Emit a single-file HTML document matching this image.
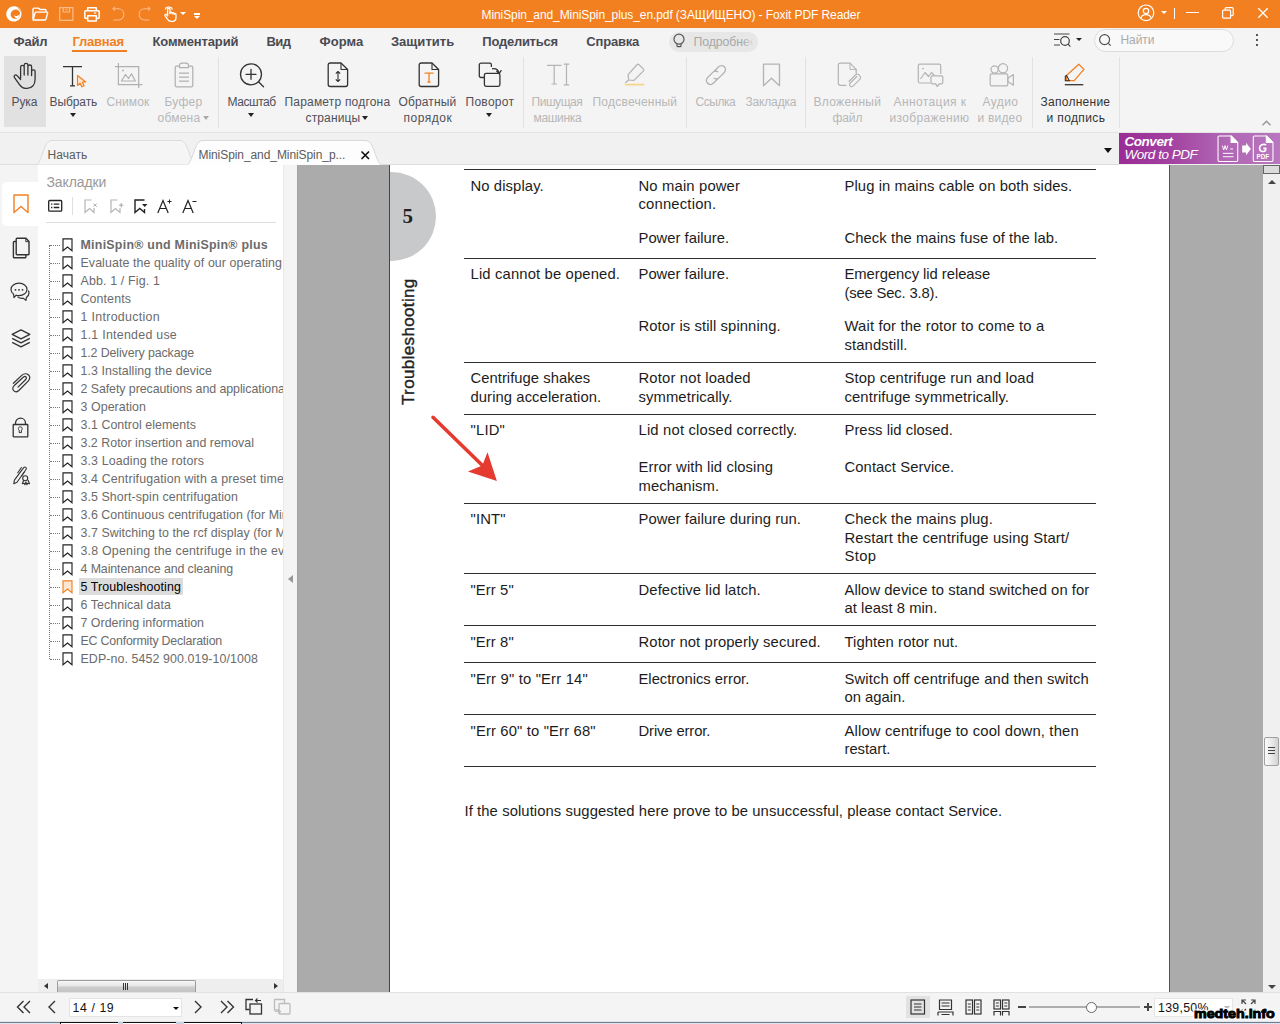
<!DOCTYPE html>
<html><head><meta charset="utf-8"><title>Foxit PDF Reader</title>
<style>
*{box-sizing:border-box;margin:0;padding:0}
html,body{width:1280px;height:1024px;overflow:hidden;background:#f4f4f4;font-family:"Liberation Sans",sans-serif;}
.a{position:absolute}
.t{position:absolute;white-space:pre;line-height:20px;height:20px}
svg{position:absolute;overflow:visible}
#title{left:0;top:0;width:1280px;height:28px;background:#f28021}
#menu{left:0;top:28px;width:1280px;height:26px;background:#f4f4f4}
#ribbon{left:0;top:54px;width:1280px;height:79px;background:#f4f4f4;border-bottom:1px solid #e3e3e3}
#tabs{left:0;top:133px;width:1280px;height:32px;background:#f1f1f1}
#docarea{left:297px;top:165px;width:966px;height:827px;background:#ababab;overflow:hidden;border-left:1px solid #a2a2a2}
#page{left:91px;top:0;width:781px;height:827px;background:#fff;border-left:1px solid #444;border-right:1px solid #555}
.dl{position:absolute;white-space:pre;font-size:14.8px;color:#1c1c1c;line-height:18px;height:18px}
.hl{position:absolute;left:464px;width:632px;height:1px;background:#302e2e}
#side{left:0;top:165px;width:38px;height:827px;background:#f4f4f4}
#bmp{left:38px;top:165px;width:245px;height:827px;background:#fff;overflow:hidden}
#split{left:283px;top:165px;width:14px;height:827px;background:#f4f4f4;border-left:1px solid #e9e9e9}
#vsb{left:1263px;top:165px;width:17px;height:827px;background:#f0f0f0}
#status{left:0;top:992px;width:1280px;height:29px;background:#f4f4f4;border-top:1px solid #e1e1e1}
.bm{position:absolute;white-space:pre;color:#6b6b6b;line-height:18px;height:18px}
.sep{position:absolute;top:57px;width:1px;height:71px;background:#e2e2e2}
.ar{position:absolute;width:0;height:0;border-left:3.5px solid transparent;border-right:3.5px solid transparent;border-top:4px solid #222}
</style></head><body>

<div class="a" id="title"></div>
<div class="a" id="menu"></div>
<div class="a" id="ribbon"></div>
<div class="a" id="tabs"></div>
<!-- TITLE BAR ICONS -->
<svg style="left:6px;top:6px" width="16" height="16" viewBox="0 0 16 16"><path d="M8.300.3C3.700.3.300 3.700.300 8.100c0 4.300 3.100 7.500 7.200 7.500 4.500 0 8-3.200 8-7.600 0-2.100-.6-3.900-1.700-5.300C12.600 1.300 10.600.3 8.300.3z" fill="#fff"/><ellipse cx="9.400" cy="8.200" rx="4.900" ry="4.500" transform="rotate(-35 9.400 8.200)" fill="#f28021"/><path d="M8.200 9.600c1.800.9 4 .3 5.600-1.700-.1 1.700-.8 3.200-2 4.200-1.700.6-3.200-.6-3.600-2.500z" fill="#fff"/><path d="M11.300 1.700c1.500.7 2.800 2 3.500 3.700" stroke="#f28021" stroke-width=".7" fill="none"/></svg>
<svg style="left:32px;top:7px" width="17" height="14" viewBox="0 0 17 14" fill="none" stroke="#fff" stroke-width="1.400" stroke-linejoin="round"><path d="M1 12.800V2.400c0-.8.500-1.300 1.300-1.300h3.800c.6 0 1 .3 1.200.8l.3.600h5.200c.8 0 1.300.5 1.300 1.300v1.300"/><path d="M1.100 13l2-7.300c.1-.4.400-.6.800-.6h10.900c.6 0 .9.400.8 1l-1.700 6.300c-.1.400-.4.600-.8.600z"/></svg>
<svg style="left:59px;top:7px" width="15" height="14" viewBox="0 0 15 14" fill="none" stroke="#f9bb8a" stroke-width="1.200"><path d="M.7.700h13.200v12.600H.7z"/><path d="M4.200.7v4.300h6.300V.7"/><path d="M6.500 2.800h1.800"/></svg>
<svg style="left:84px;top:7px" width="16" height="15" viewBox="0 0 16 15" fill="none" stroke="#fff" stroke-width="1.500" stroke-linejoin="round"><path d="M3.700 3.700V.8h8.600v2.900"/><path d="M3.700 11.200H1.600c-.5 0-.8-.3-.8-.8V4.600c0-.5.300-.8.800-.8h12.800c.5 0 .8.300.8.800v5.800c0 .5-.3.800-.8.800h-2.100"/><path d="M3.700 8.700h8.600v5.400H3.700z"/><path d="M10 6h2.200" stroke-width="1.100"/></svg>
<svg style="left:112px;top:6px" width="13" height="15" viewBox="0 0 13 15" fill="none" stroke="#f9b988" stroke-width="1.050"><path d="M1 2.700h5.400c3.100 0 5.400 2.400 5.400 5.600s-2.300 5.600-5.400 5.600H1.500"/><path d="M2.900.8 1 2.700l1.900 1.900"/></svg>
<svg style="left:138px;top:6px" width="13" height="15" viewBox="0 0 13 15" fill="none" stroke="#f9b988" stroke-width="1.050"><path d="M12 2.700H6.600c-3.100 0-5.400 2.400-5.400 5.600s2.300 5.600 5.400 5.600h4.900"/><path d="M10.100.8 12 2.700l-1.900 1.900"/></svg>
<svg style="left:163px;top:6px" width="14" height="16" viewBox="0 0 14 16" fill="none" stroke="#fff" stroke-width="1.300" stroke-linejoin="round" stroke-linecap="round"><path d="M4.600 9.500V3.300c0-1.700 2.400-1.700 2.400 0v4.200"/><path d="M7 7.200c0-1.500 2.100-1.500 2.100 0v.6c0-1.400 2-1.400 2 0v.6c0-1.300 1.900-1.300 1.900 0v3.100c0 2.400-1.300 3.800-3.500 3.800H8c-1.600 0-2.500-.7-3.400-2L2.100 9.900c-.8-1.200.7-2.200 1.600-1.200l.9 1"/><path d="M2.500 3.300C2.500.300 9.100.300 9.100 3.300" stroke-width="1.100"/></svg>
<div class="ar" style="left:180px;top:12px;border-top-color:#fff;border-left-width:3px;border-right-width:3px;border-top-width:3.500px"></div>
<div class="a" style="left:193.500px;top:13px;width:6px;height:1.500px;background:#fff"></div>
<div class="ar" style="left:193.500px;top:16px;border-top-color:#fff;border-left-width:3px;border-right-width:3px;border-top-width:3.500px"></div>
<!-- window controls -->
<svg style="left:1137px;top:4px" width="18" height="18" viewBox="0 0 18 18" fill="none" stroke="#fff" stroke-width="1.200"><circle cx="9" cy="8.800" r="7.800"/><circle cx="9" cy="7" r="2.700"/><path d="M3.800 14.400c.7-2.500 2.700-3.700 5.200-3.700s4.500 1.200 5.200 3.700"/></svg>
<div class="ar" style="left:1160.500px;top:11px;border-top-color:#fff;border-left-width:3px;border-right-width:3px;border-top-width:3.500px"></div>
<div class="a" style="left:1174px;top:8px;width:1.200px;height:11px;background:#fff"></div>
<div class="a" style="left:1186px;top:12px;width:12.500px;height:1.300px;background:#fff"></div>
<svg style="left:1222px;top:7px" width="12" height="12" viewBox="0 0 12 12" fill="none" stroke="#fff" stroke-width="1.200"><rect x=".6" y="3.200" width="8" height="8" rx="1"/><path d="M3.200 3V1.600c0-.6.400-1 1-1h6c.6 0 1 .4 1 1v6c0 .6-.4 1-1 1H8.800"/></svg>
<svg style="left:1258px;top:8px" width="10" height="10" viewBox="0 0 10 10" fill="none" stroke="#fff" stroke-width="1.300"><path d="M.3.300l9.400 9.400M9.700.3.300 9.700"/></svg>
<!-- MENU ROW -->
<div class="a" style="left:72px;top:49.500px;width:55px;height:2.500px;background:#f28021"></div>
<div class="a" style="left:668.500px;top:31.500px;width:89.500px;height:20px;border-radius:10px;background:#e7e7e7;overflow:hidden"><div class="t" style="left:25px;top:0;font-size:12.300px;color:#a8a8a8;letter-spacing:-.1px">Подробнее</div><div class="a" style="left:74px;top:0;width:16px;height:20px;background:linear-gradient(90deg,rgba(231,231,231,0),#e7e7e7 70%)"></div></div>
<svg style="left:673px;top:33px" width="12" height="16" viewBox="0 0 12 16" fill="none" stroke="#555" stroke-width="1.200"><circle cx="6" cy="6.200" r="5"/><path d="M4 11.300v1.500c0 .5.400.9.900.9h2.200c.5 0 .9-.4.900-.9v-1.500"/></svg>
<svg style="left:1054px;top:33px" width="17" height="15" viewBox="0 0 17 15" fill="none" stroke="#444" stroke-width="1.200"><path d="M0 1h15.500M0 6.500h5.500M0 12h6"/><circle cx="11" cy="8" r="4.300"/><path d="M14.100 11.200l2.300 2.500"/></svg>
<div class="ar" style="left:1075.500px;top:38px;border-left-width:3px;border-right-width:3px;border-top-width:3.500px"></div>
<div class="a" style="left:1094px;top:29px;width:140px;height:22.500px;border-radius:11.500px;background:#f9f9f9;border:1px solid #dcdcdc"></div>
<svg style="left:1099px;top:34px" width="13" height="13" viewBox="0 0 13 13" fill="none" stroke="#555" stroke-width="1.200"><circle cx="5.600" cy="5.600" r="5"/><path d="M9.300 9.300l2.400 2.400"/></svg>
<div class="a" style="left:1256px;top:34px;width:2.200px;height:2.200px;background:#555;box-shadow:0 5px 0 #555,0 10px 0 #555"></div>
<!-- RIBBON -->
<div class="a" style="left:4px;top:56px;width:42px;height:71px;background:#e1e1e1"></div>
<div class="sep" style="left:218px"></div><div class="sep" style="left:523px"></div><div class="sep" style="left:686px"></div><div class="sep" style="left:805px"></div><div class="sep" style="left:1032px"></div><div class="sep" style="left:1119px"></div>
<div class="ar" style="left:69.500px;top:113px"></div>
<div class="ar" style="left:202.500px;top:115.500px;border-top-color:#aaa"></div>
<div class="ar" style="left:248px;top:113px"></div>
<div class="ar" style="left:362px;top:115.500px"></div>
<div class="ar" style="left:486px;top:113px"></div>
<svg style="left:1262px;top:120px" width="9" height="6" viewBox="0 0 9 6" fill="none" stroke="#999" stroke-width="1.500"><path d="M.5 5.300l4-4 4 4"/></svg>
<!-- ribbon icons -->
<!-- hand -->
<svg style="left:13px;top:62px" width="25" height="27" viewBox="0 0 25 27" fill="none" stroke="#333" stroke-width="1.300" stroke-linecap="round" stroke-linejoin="round"><path d="M7.600 16V5.200c0-2.400 3.600-2.400 3.600 0V13M11.200 5V3.200c0-2.400 3.700-2.400 3.700 0V13M14.900 4.800c0-2.400 3.700-2.400 3.700 0V13.500M18.600 9.600c0-2.300 3.500-2.300 3.500 0V17c0 5.500-3 9.300-8 9.300h-1.600c-2.800 0-4.400-1.300-5.800-3.400L1.500 15.700c-1.300-2 1-3.700 2.600-2.100l3.500 3.900"/></svg>
<!-- select text -->
<svg style="left:62px;top:65px" width="26" height="23" viewBox="0 0 26 23" fill="none"><path d="M1 1.700h19M10.500 1.700v19M8 20.800h5" stroke="#333" stroke-width="1.300"/><path d="M15.500 10.500v10l2.600-2.300 1.700 3.600 2.300-1.100-1.700-3.500 3.400-.3z" fill="#fde6d0" stroke="#f28021" stroke-width="1.200" stroke-linejoin="round"/></svg>
<!-- snapshot -->
<svg style="left:114px;top:62px" width="29" height="27" viewBox="0 0 29 27" fill="none" stroke="#b0b0b0" stroke-width="1.200"><path d="M4.400 1v21.700h24M1 4.700h23.700V26"/><path d="M7.500 19l4-6.500 3 4 3-4.800 3.800 7.300z" stroke-linejoin="round"/><circle cx="9" cy="8.500" r=".9" fill="#b0b0b0" stroke="none"/></svg>
<!-- clipboard -->
<svg style="left:174px;top:62px" width="20" height="26" viewBox="0 0 20 26" fill="none" stroke="#b0b0b0" stroke-width="1.200"><path d="M5.500 4.200H2.400c-.7 0-1.200.5-1.200 1.200v18.200c0 .7.500 1.200 1.200 1.200h15.200c.7 0 1.200-.5 1.200-1.200V5.400c0-.7-.5-1.200-1.200-1.200h-3.100"/><path d="M5.500 5.600V3.400c0-1.300 1-2.300 2.300-2.300h4.400c1.300 0 2.300 1 2.300 2.300v2.200z"/><path d="M5 11.200h10M5 15.200h10M5 19.200h10"/></svg>
<!-- zoom -->
<svg style="left:239px;top:62px" width="27" height="27" viewBox="0 0 27 27" fill="none" stroke="#333" stroke-width="1.300"><circle cx="12" cy="12.300" r="10.500"/><path d="M12 7.300v10M7 12.300h10M19.500 19.800l5 5" stroke-linecap="round"/></svg>
<!-- fit page -->
<svg style="left:327px;top:62px" width="22" height="26" viewBox="0 0 22 26" fill="none" stroke="#333" stroke-width="1.300" stroke-linejoin="round"><path d="M14 1H3.300C2 1 1.200 1.800 1.200 3.100v19.300c0 1.300.8 2.100 2.100 2.100h15.200c1.300 0 2.100-.8 2.100-2.100V7.500z"/><path d="M14 1v6.500h6.600" stroke-width="1.100"/><path d="M11 9.500v10M8.800 11.700 11 9.500l2.200 2.200M8.800 17.300 11 19.500l2.200-2.200" stroke-width="1.100"/></svg>
<!-- reflow -->
<svg style="left:418px;top:62px" width="22" height="26" viewBox="0 0 22 26" fill="none" stroke="#333" stroke-width="1.300" stroke-linejoin="round"><path d="M14 1H3.300C2 1 1.200 1.800 1.200 3.100v19.300c0 1.300.8 2.100 2.100 2.100h15.200c1.300 0 2.100-.8 2.100-2.100V7.500z"/><path d="M14 1v6.500h6.600" stroke-width="1.100"/><path d="M6.500 11.200h9M11 11.200v9M9.300 20.200h3.400" stroke="#f28021" stroke-width="1.300"/></svg>
<!-- rotate -->
<svg style="left:478px;top:62px" width="25" height="26" viewBox="0 0 25 26" fill="none" stroke="#333" stroke-width="1.300" stroke-linejoin="round"><path d="M6.300 15.500H3c-1 0-1.700-.7-1.700-1.700V2.900c0-1 .7-1.700 1.700-1.700h8.700c1 0 1.700.7 1.700 1.700v2"/><rect x="6.400" y="11.300" width="15.500" height="13" rx="1.700"/><path d="M14 6.800c3.600-.6 6.300 1 7 4.300"/><path d="M18.700 9.200l2.500 2.200 1.900-2.800" stroke-linecap="round"/></svg>
<!-- typewriter -->
<svg style="left:546px;top:63px" width="25" height="23" viewBox="0 0 25 23" fill="none" stroke="#b3b3b3" stroke-width="1.200"><path d="M1 2.400h14.500M8.200 2.400v18.400M5.500 21h5.500M17.800 1.200h5.400M17.800 21.800h5.400M20.500 1.200v20.600"/></svg>
<!-- highlight -->
<svg style="left:624px;top:63px" width="22" height="24" viewBox="0 0 22 24" fill="none" stroke="#b3b3b3" stroke-width="1.200" stroke-linejoin="round"><path d="M14.800 1.500l4.700 4.700c.5.500.5 1.100 0 1.600L10 17.300l-5.300-.3-.6-5.400 9.100-10.100c.5-.5 1.100-.5 1.600 0z"/><path d="M4.700 17 2 19.200l-1 .1" /><path d="M.8 21.600h19.500" stroke="#f7d68a" stroke-width="1.800"/></svg>
<!-- link -->
<svg style="left:704px;top:63px" width="24" height="24" viewBox="0 0 24 24" fill="none" stroke="#b3b3b3" stroke-width="1.300" stroke-linecap="round"><path d="M10.200 8.200l4.200-4.200c1.800-1.800 4.300-1.800 5.900-.2 1.600 1.600 1.600 4.100-.2 5.900l-4.900 4.900c-1.500 1.500-3.700 1.500-5 .6"/><path d="M13.800 15.800l-4.200 4.200c-1.800 1.800-4.300 1.800-5.900.2-1.600-1.600-1.600-4.100.2-5.900l4.900-4.900c1.500-1.500 3.700-1.500 5-.6"/></svg>
<!-- bookmark -->
<svg style="left:762px;top:63px" width="19" height="24" viewBox="0 0 19 24" fill="none" stroke="#b3b3b3" stroke-width="1.300" stroke-linejoin="round"><path d="M1.500 1.200h16v21.500l-8-7.500-8 7.500z"/></svg>
<!-- attachment file -->
<svg style="left:837px;top:62px" width="24" height="27" viewBox="0 0 24 27" fill="none" stroke="#b3b3b3" stroke-width="1.200" stroke-linejoin="round" stroke-linecap="round"><path d="M9 23.300H3.300c-1.200 0-2-.8-2-2V3.200c0-1.200.8-2 2-2H13l6.200 6.200v4"/><path d="M13 1.200v6.200h6.200" stroke-width="1"/><path d="M19.800 14.500l-6.500 6.500c-1 1-.9 2.300-.1 3.100.8.800 2.100.8 3.100-.2l6-6c1.500-1.500 1.400-3.400.2-4.600-1.200-1.200-3.100-1.200-4.600.2l-6 6" stroke-width="1.100"/></svg>
<!-- image annotation -->
<svg style="left:917px;top:63px" width="27" height="25" viewBox="0 0 27 25" fill="none" stroke="#b3b3b3" stroke-width="1.200" stroke-linejoin="round"><path d="M13.500 20H2.800c-.9 0-1.500-.6-1.500-1.500V2.700c0-.9.600-1.500 1.500-1.500h19.400c.9 0 1.500.6 1.500 1.500V11"/><path d="M3.500 16l4.500-6.500 3.500 4 3-4 3 3"/><circle cx="6" cy="5.600" r=".9" fill="#b3b3b3" stroke="none"/><path d="M15.200 12.800h9.400c.7 0 1.200.5 1.200 1.200v5.600c0 .7-.5 1.200-1.200 1.200h-2.400l-1.900 2.600-1.700-2.600h-3.400c-.7 0-1.200-.5-1.200-1.200V14c0-.7.500-1.200 1.200-1.200z" fill="#f4f4f4"/></svg>
<!-- audio video -->
<svg style="left:989px;top:63px" width="26" height="24" viewBox="0 0 26 24" fill="none" stroke="#b3b3b3" stroke-width="1.200" stroke-linejoin="round"><circle cx="5.600" cy="6.500" r="3.600"/><circle cx="14" cy="5.300" r="4.600"/><rect x="1.200" y="10.800" width="17.600" height="12" rx="1.400"/><path d="M18.800 15.300l5.600-3.700v10.600l-5.600-3.700z"/></svg>
<!-- fill & sign -->
<svg style="left:1063px;top:63px" width="24" height="24" viewBox="0 0 24 24" fill="none" stroke-linejoin="round"><path d="M15.800 1.300l5.100 5.100-9.700 11.200-7.600.1-.100-5.300z" stroke="#f28021" stroke-width="1.300"/><path d="M3.500 12.400l2.900 5.300H2.300v-4.500z" stroke="#333" stroke-width="1.100"/><path d="M1.800 21.700h18.500" stroke="#333" stroke-width="1.300"/></svg>

<!-- TABS -->
<div class="a" style="left:0;top:164px;width:1119px;height:1px;background:#dedede"></div>
<svg style="left:0;top:133px" width="400" height="32" viewBox="0 133 400 32"><path d="M37.500 164.500C43 158 43.500 140.500 52 140.500H180C188 140.500 189 158 194.500 164.500" fill="#f5f5f5" stroke="#dcdcdc" stroke-width="1"/><path d="M188 164.500C194 158 194.500 140.500 203 140.500H365C374 140.500 374.500 158 380.500 164.500V165.500H188z" fill="#fdfdfd" stroke="none"/><path d="M188 164.500C194 158 194.500 140.500 203 140.500H365C374 140.500 374.500 158 380.500 164.500" fill="none" stroke="#d9d9d9" stroke-width="1"/><path d="M361.500 151.500l7.500 7.500M369 151.500l-7.500 7.500" stroke="#111" stroke-width="1.600" fill="none"/></svg>
<div class="ar" style="left:1103.500px;top:147.500px;border-left-width:4.500px;border-right-width:4.500px;border-top-width:5px;border-top-color:#111"></div>
<!-- convert banner -->
<div class="a" style="left:1119px;top:133px;width:161px;height:31px;background:linear-gradient(90deg,#9a2c96 0%,#a2409f 30%,#b066b4 65%,#b877be 100%)"></div>
<svg style="left:1216.500px;top:135px" width="60" height="28" viewBox="0 0 62 29" fill="none" stroke="#fff" stroke-width="1.100" stroke-linejoin="round"><path d="M14.500 1H2.200C1.500 1 1 1.500 1 2.200v24c0 .7.500 1.200 1.200 1.200h18c.7 0 1.200-.5 1.200-1.200V7.800z"/><path d="M14.500 1v6.800h6.900z" fill="#fff"/><path d="M5.500 11l1.400 4.500L8.300 11l1.400 4.500 1.400-4.500M13.500 14.500h3M6 19h11M6 22.500h11" stroke-width="1"/><path d="M26 11h4V8l5 6.500-5 6.500v-3h-4z" fill="#fff" stroke="none"/><path d="M51 1H38.700c-.7 0-1.200.5-1.200 1.200v24c0 .7.500 1.200 1.200 1.200h18c.7 0 1.200-.5 1.200-1.200V7.800z"/><path d="M51 1v6.800h6.900z" fill="#fff"/><path d="M51 10.200c-3.500-1.500-7 .3-7 3.500 0 3 3.400 4.400 6 2.600l.5-2.400h-2.600" stroke-width="1.700"/><text x="40.800" y="25" font-family="Liberation Sans" font-size="6.500" fill="#fff" stroke="none" font-weight="700">PDF</text></svg>

<div class="a" id="side"></div>
<div class="a" id="bmp"></div>
<div class="a" id="split"></div>
<div class="a" id="docarea"><div class="a" id="page"></div></div>
<div class="a" id="vsb"></div>
<div class="a" id="status"></div>
<!-- side strip -->
<div class="a" style="left:2px;top:181.500px;width:36px;height:44.500px;background:#fff;border-radius:5px 0 0 5px"></div>
<svg style="left:13px;top:194px" width="16" height="20" viewBox="0 0 16 20" fill="none" stroke="#f28021" stroke-width="1.400" stroke-linejoin="round"><path d="M1 1h14v17.500l-7-6-7 6z"/></svg>
<svg style="left:12px;top:237px" width="19" height="22" viewBox="0 0 19 22" fill="none" stroke="#333" stroke-width="1.400" stroke-linejoin="round"><path d="M4.200 4.500H2.200c-.5 0-.8.300-.8.800v14.600c0 .5.300.8.800.8h10.900c.5 0 .8-.3.800-.8v-2"/><path d="M5 1.300h9l3 3.200v12.400c0 .5-.3.800-.8.800H5c-.5 0-.8-.3-.8-.8V2.100c0-.5.300-.8.800-.8z"/><path d="M13.800 1.500v3.200h3" stroke-width="1"/></svg>
<svg style="left:10px;top:282px" width="21" height="21" viewBox="0 0 21 21" fill="none" stroke="#333" stroke-width="1.200" stroke-linejoin="round"><path d="M9 1.200c4.500 0 8 2.700 8 6.200s-3.500 6.200-8 6.200c-1 0-1.900-.1-2.800-.4L4 15.500l-.4-3.300C2 11 1 9.300 1 7.400 1 3.900 4.500 1.200 9 1.200z"/><path d="M18.300 8.600c.5.800.7 1.600.7 2.500 0 1.700-1 3.200-2.600 4.300l-.5 3-2.400-2c-2.300.2-4.600-.3-6-1.700"/><circle cx="5.500" cy="7.800" r=".9" fill="#333" stroke="none"/><circle cx="9" cy="7.800" r=".9" fill="#333" stroke="none"/><circle cx="12.500" cy="7.800" r=".9" fill="#333" stroke="none"/></svg>
<svg style="left:11px;top:329px" width="20" height="19" viewBox="0 0 20 19" fill="none" stroke="#333" stroke-width="1.300" stroke-linejoin="round"><path d="M10 .8l8.800 4.500L10 9.800 1.200 5.300z"/><path d="M1.200 9.300l8.800 4.500 8.800-4.500M1.200 13.300l8.800 4.500 8.800-4.500"/></svg>
<svg style="left:10px;top:370px" width="22" height="24" viewBox="0 0 22 24" fill="none" stroke="#333" stroke-width="1.200" stroke-linecap="round"><path d="M3.400 13.300L12 5.100C14 3.200 17 3.400 18.600 5c1.600 1.600 1.600 4-.2 5.800L8.800 20.500c-1.600 1.500-3.800 1.500-5.100.2-1.300-1.300-1.300-3.300.3-4.900L13.500 7c1-.8 2-.6 2.500 0 .6.700.5 1.700-.3 2.500L8 17.200"/></svg>
<svg style="left:12px;top:417px" width="17" height="21" viewBox="0 0 17 21" fill="none" stroke="#333" stroke-width="1.300" stroke-linejoin="round"><rect x="1.200" y="7.500" width="14.600" height="12.300" rx=".6"/><path d="M3.500 7.400V6.200C3.500 3.300 5.700 1.200 8.500 1.200s5 2.100 5 5v1.200"/><path d="M8.300 9.800c1.100 0 1.900.8 1.900 1.800 0 .7-.3 1.200-.8 1.500v2.500H7.200v-2.500c-.5-.3-.8-.8-.8-1.500 0-1 .8-1.800 1.900-1.800z" stroke-width="1"/></svg>
<svg style="left:12px;top:466px" width="19" height="20" viewBox="0 0 19 20" fill="none" stroke="#333" stroke-width="1.100" stroke-linejoin="round" stroke-linecap="round"><path d="M11.700 1.700c.6-.7 1.500-.8 2.100-.3.600.5.700 1.400.2 2.100L5 16.300l-3.200 1.400.6-3.500z"/><path d="M9.400 1.500L5.800 6.800M12.500 5.800l-2.700 4"/><circle cx="13.200" cy="12.200" r="2.500"/><path d="M11.700 14.300l-1.400 3.400 1.800-.5.800 1.500 1-2.700 1 2.700.8-1.500 1.800.5-1.400-3.400"/></svg>
<!-- bookmark toolbar -->
<svg style="left:48px;top:199px" width="16" height="14" viewBox="0 0 16 14" fill="none" stroke="#222" stroke-width="1.300"><rect x=".7" y="1.500" width="13" height="10.700" rx="1"/><path d="M5.700 5.200h5.600M5.700 8.500h5.600M3 5.200h1.300M3 8.500h1.300"/></svg>
<div class="a" style="left:72px;top:197px;width:1px;height:18px;background:#e0e0e0"></div>
<svg style="left:84px;top:199px" width="15" height="15" viewBox="0 0 15 15" fill="none" stroke="#b5b5b5" stroke-width="1.200"><path d="M7.500 1H1v12.500l4.500-4 4.500 4V9"/><path d="M9.700 4.700l3 3M12.700 4.700l-3 3" stroke-width="1" stroke="#a6a6a6"/></svg>
<svg style="left:110px;top:199px" width="15" height="15" viewBox="0 0 15 15" fill="none" stroke="#b5b5b5" stroke-width="1.200"><path d="M7.500 1H1v12.500l4.500-4 4.500 4V9"/><path d="M11.200 4v4.400M9 6.200h4.400" stroke-width="1" stroke="#a6a6a6"/></svg>
<svg style="left:134px;top:199px" width="15" height="15" viewBox="0 0 15 15" fill="none" stroke="#222" stroke-width="1.400"><path d="M10.500 1H1v12.500l4.800-4 4.700 4V10"/><path d="M8 5h5.500l-2.750 3z" fill="#222" stroke="none"/></svg>
<svg style="left:157px;top:198px" width="16" height="16" viewBox="0 0 16 16" fill="none" stroke="#222" stroke-width="1.200"><path d="M.8 15L6 2.500 11.200 15M2.700 10.500h6.600"/><path d="M10.500 3.500h4M12.500 1.500v4" stroke-width="1"/></svg>
<svg style="left:182px;top:198px" width="16" height="16" viewBox="0 0 16 16" fill="none" stroke="#222" stroke-width="1.200"><path d="M.8 15L6 2.500 11.200 15M2.700 10.500h6.600"/><path d="M10.500 3.500h4" stroke-width="1"/></svg>
<div class="a" style="left:46px;top:222px;width:230px;height:1px;background:#dedede"></div>
<!-- tree lines + bookmark icons -->
<div class="a" style="left:49px;top:245px;width:0;height:414px;border-left:1px dotted #777"></div>
<div class="a" style="left:50px;top:245px;width:10px;height:0;border-top:1px dotted #777"></div>
<svg style="left:62px;top:238px" width="11" height="14" viewBox="0 0 11 14" fill="none" stroke="#222" stroke-width="1.150"><path d="M1 .8h9v12l-4.500-3.800L1 12.800z"/></svg>
<div class="a" style="left:50px;top:263px;width:10px;height:0;border-top:1px dotted #777"></div>
<svg style="left:62px;top:256px" width="11" height="14" viewBox="0 0 11 14" fill="none" stroke="#222" stroke-width="1.150"><path d="M1 .8h9v12l-4.500-3.800L1 12.800z"/></svg>
<div class="a" style="left:50px;top:281px;width:10px;height:0;border-top:1px dotted #777"></div>
<svg style="left:62px;top:274px" width="11" height="14" viewBox="0 0 11 14" fill="none" stroke="#222" stroke-width="1.150"><path d="M1 .8h9v12l-4.500-3.800L1 12.800z"/></svg>
<div class="a" style="left:50px;top:299px;width:10px;height:0;border-top:1px dotted #777"></div>
<svg style="left:62px;top:292px" width="11" height="14" viewBox="0 0 11 14" fill="none" stroke="#222" stroke-width="1.150"><path d="M1 .8h9v12l-4.500-3.800L1 12.800z"/></svg>
<div class="a" style="left:50px;top:317px;width:10px;height:0;border-top:1px dotted #777"></div>
<svg style="left:62px;top:310px" width="11" height="14" viewBox="0 0 11 14" fill="none" stroke="#222" stroke-width="1.150"><path d="M1 .8h9v12l-4.500-3.800L1 12.800z"/></svg>
<div class="a" style="left:50px;top:335px;width:10px;height:0;border-top:1px dotted #777"></div>
<svg style="left:62px;top:328px" width="11" height="14" viewBox="0 0 11 14" fill="none" stroke="#222" stroke-width="1.150"><path d="M1 .8h9v12l-4.500-3.800L1 12.800z"/></svg>
<div class="a" style="left:50px;top:353px;width:10px;height:0;border-top:1px dotted #777"></div>
<svg style="left:62px;top:346px" width="11" height="14" viewBox="0 0 11 14" fill="none" stroke="#222" stroke-width="1.150"><path d="M1 .8h9v12l-4.500-3.800L1 12.800z"/></svg>
<div class="a" style="left:50px;top:371px;width:10px;height:0;border-top:1px dotted #777"></div>
<svg style="left:62px;top:364px" width="11" height="14" viewBox="0 0 11 14" fill="none" stroke="#222" stroke-width="1.150"><path d="M1 .8h9v12l-4.500-3.800L1 12.800z"/></svg>
<div class="a" style="left:50px;top:389px;width:10px;height:0;border-top:1px dotted #777"></div>
<svg style="left:62px;top:382px" width="11" height="14" viewBox="0 0 11 14" fill="none" stroke="#222" stroke-width="1.150"><path d="M1 .8h9v12l-4.500-3.800L1 12.800z"/></svg>
<div class="a" style="left:50px;top:407px;width:10px;height:0;border-top:1px dotted #777"></div>
<svg style="left:62px;top:400px" width="11" height="14" viewBox="0 0 11 14" fill="none" stroke="#222" stroke-width="1.150"><path d="M1 .8h9v12l-4.500-3.800L1 12.800z"/></svg>
<div class="a" style="left:50px;top:425px;width:10px;height:0;border-top:1px dotted #777"></div>
<svg style="left:62px;top:418px" width="11" height="14" viewBox="0 0 11 14" fill="none" stroke="#222" stroke-width="1.150"><path d="M1 .8h9v12l-4.500-3.800L1 12.800z"/></svg>
<div class="a" style="left:50px;top:443px;width:10px;height:0;border-top:1px dotted #777"></div>
<svg style="left:62px;top:436px" width="11" height="14" viewBox="0 0 11 14" fill="none" stroke="#222" stroke-width="1.150"><path d="M1 .8h9v12l-4.500-3.800L1 12.800z"/></svg>
<div class="a" style="left:50px;top:461px;width:10px;height:0;border-top:1px dotted #777"></div>
<svg style="left:62px;top:454px" width="11" height="14" viewBox="0 0 11 14" fill="none" stroke="#222" stroke-width="1.150"><path d="M1 .8h9v12l-4.500-3.800L1 12.800z"/></svg>
<div class="a" style="left:50px;top:479px;width:10px;height:0;border-top:1px dotted #777"></div>
<svg style="left:62px;top:472px" width="11" height="14" viewBox="0 0 11 14" fill="none" stroke="#222" stroke-width="1.150"><path d="M1 .8h9v12l-4.500-3.800L1 12.800z"/></svg>
<div class="a" style="left:50px;top:497px;width:10px;height:0;border-top:1px dotted #777"></div>
<svg style="left:62px;top:490px" width="11" height="14" viewBox="0 0 11 14" fill="none" stroke="#222" stroke-width="1.150"><path d="M1 .8h9v12l-4.500-3.800L1 12.800z"/></svg>
<div class="a" style="left:50px;top:515px;width:10px;height:0;border-top:1px dotted #777"></div>
<svg style="left:62px;top:508px" width="11" height="14" viewBox="0 0 11 14" fill="none" stroke="#222" stroke-width="1.150"><path d="M1 .8h9v12l-4.500-3.800L1 12.800z"/></svg>
<div class="a" style="left:50px;top:533px;width:10px;height:0;border-top:1px dotted #777"></div>
<svg style="left:62px;top:526px" width="11" height="14" viewBox="0 0 11 14" fill="none" stroke="#222" stroke-width="1.150"><path d="M1 .8h9v12l-4.500-3.800L1 12.800z"/></svg>
<div class="a" style="left:50px;top:551px;width:10px;height:0;border-top:1px dotted #777"></div>
<svg style="left:62px;top:544px" width="11" height="14" viewBox="0 0 11 14" fill="none" stroke="#222" stroke-width="1.150"><path d="M1 .8h9v12l-4.500-3.800L1 12.800z"/></svg>
<div class="a" style="left:50px;top:569px;width:10px;height:0;border-top:1px dotted #777"></div>
<svg style="left:62px;top:562px" width="11" height="14" viewBox="0 0 11 14" fill="none" stroke="#222" stroke-width="1.150"><path d="M1 .8h9v12l-4.500-3.800L1 12.800z"/></svg>
<div class="a" style="left:50px;top:587px;width:10px;height:0;border-top:1px dotted #777"></div>
<svg style="left:62px;top:580px" width="11" height="14" viewBox="0 0 11 14" fill="#fde6d2" stroke="#f28021" stroke-width="1.150"><path d="M1 .8h9v12l-4.500-3.800L1 12.800z"/></svg>
<div class="a" style="left:50px;top:605px;width:10px;height:0;border-top:1px dotted #777"></div>
<svg style="left:62px;top:598px" width="11" height="14" viewBox="0 0 11 14" fill="none" stroke="#222" stroke-width="1.150"><path d="M1 .8h9v12l-4.500-3.800L1 12.800z"/></svg>
<div class="a" style="left:50px;top:623px;width:10px;height:0;border-top:1px dotted #777"></div>
<svg style="left:62px;top:616px" width="11" height="14" viewBox="0 0 11 14" fill="none" stroke="#222" stroke-width="1.150"><path d="M1 .8h9v12l-4.500-3.800L1 12.800z"/></svg>
<div class="a" style="left:50px;top:641px;width:10px;height:0;border-top:1px dotted #777"></div>
<svg style="left:62px;top:634px" width="11" height="14" viewBox="0 0 11 14" fill="none" stroke="#222" stroke-width="1.150"><path d="M1 .8h9v12l-4.500-3.800L1 12.800z"/></svg>
<div class="a" style="left:50px;top:659px;width:10px;height:0;border-top:1px dotted #777"></div>
<svg style="left:62px;top:652px" width="11" height="14" viewBox="0 0 11 14" fill="none" stroke="#222" stroke-width="1.150"><path d="M1 .8h9v12l-4.500-3.800L1 12.800z"/></svg>
<!-- splitter arrow -->
<div class="a" style="left:288px;top:575px;width:0;height:0;border-top:4.500px solid transparent;border-bottom:4.500px solid transparent;border-right:5px solid #989898"></div>
<!-- h scrollbar in panel -->
<div class="a" style="left:38px;top:978.500px;width:245px;height:13.500px;background:#eeeeee"></div>
<div class="a" style="left:56.500px;top:979.500px;width:139px;height:12.500px;border:1px solid #9c9c9c;border-bottom:none;border-radius:2px 2px 0 0;background:linear-gradient(180deg,#f8f8f8 0%,#e6e6e6 45%,#cdcdcd 55%,#c4c4c4 100%)"></div>
<div class="a" style="left:122.500px;top:983px;width:1px;height:6.500px;background:#333;box-shadow:2px 0 0 #333,4px 0 0 #333"></div>
<div class="a" style="left:43.500px;top:983px;width:0;height:0;border-top:3.500px solid transparent;border-bottom:3.500px solid transparent;border-right:4.500px solid #333"></div>
<div class="a" style="left:273.500px;top:983px;width:0;height:0;border-top:3.500px solid transparent;border-bottom:3.500px solid transparent;border-left:4.500px solid #333"></div>

<div class="bm" style="left:80.5px;top:236px;font-size:12.4px;letter-spacing:0.267px;font-weight:700;">MiniSpin® und MiniSpin® plus</div>
<div class="bm" style="left:80.5px;top:254px;font-size:12.4px;letter-spacing:0.084px;width:202.5px;overflow:hidden;">Evaluate the quality of our operating manuals</div>
<div class="bm" style="left:80.5px;top:272px;font-size:12.4px;letter-spacing:0.157px;">Abb. 1 / Fig. 1</div>
<div class="bm" style="left:80.5px;top:290px;font-size:12.4px;letter-spacing:0.113px;">Contents</div>
<div class="bm" style="left:80.5px;top:308px;font-size:12.4px;letter-spacing:0.315px;">1 Introduction</div>
<div class="bm" style="left:80.5px;top:326px;font-size:12.4px;letter-spacing:0.261px;">1.1 Intended use</div>
<div class="bm" style="left:80.5px;top:344px;font-size:12.4px;letter-spacing:-0.111px;">1.2 Delivery package</div>
<div class="bm" style="left:80.5px;top:362px;font-size:12.4px;letter-spacing:0.080px;">1.3 Installing the device</div>
<div class="bm" style="left:80.5px;top:380px;font-size:12.4px;letter-spacing:-0.063px;width:202.5px;overflow:hidden;">2 Safety precautions and applicational limits</div>
<div class="bm" style="left:80.5px;top:398px;font-size:12.4px;letter-spacing:0.068px;">3 Operation</div>
<div class="bm" style="left:80.5px;top:416px;font-size:12.4px;letter-spacing:0.058px;">3.1 Control elements</div>
<div class="bm" style="left:80.5px;top:434px;font-size:12.4px;letter-spacing:0.020px;">3.2 Rotor insertion and removal</div>
<div class="bm" style="left:80.5px;top:452px;font-size:12.4px;letter-spacing:0.134px;">3.3 Loading the rotors</div>
<div class="bm" style="left:80.5px;top:470px;font-size:12.4px;letter-spacing:0.139px;width:202.5px;overflow:hidden;">3.4 Centrifugation with a preset time</div>
<div class="bm" style="left:80.5px;top:488px;font-size:12.4px;letter-spacing:0.087px;">3.5 Short-spin centrifugation</div>
<div class="bm" style="left:80.5px;top:506px;font-size:12.4px;letter-spacing:0.042px;width:202.5px;overflow:hidden;">3.6 Continuous centrifugation (for MiniSpin plus)</div>
<div class="bm" style="left:80.5px;top:524px;font-size:12.4px;letter-spacing:0.057px;width:202.5px;overflow:hidden;">3.7 Switching to the rcf display (for MiniSpin plus)</div>
<div class="bm" style="left:80.5px;top:542px;font-size:12.4px;letter-spacing:0.211px;width:202.5px;overflow:hidden;">3.8 Opening the centrifuge in the event of a power failure</div>
<div class="bm" style="left:80.5px;top:560px;font-size:12.4px;letter-spacing:-0.096px;">4 Maintenance and cleaning</div>
<div class="a" style="left:79px;top:577.8px;width:104px;height:17.5px;background:#dcdcdc"></div>
<div class="bm" style="left:80.5px;top:578px;font-size:12.4px;letter-spacing:0.117px;color:#000;">5 Troubleshooting</div>
<div class="bm" style="left:80.5px;top:596px;font-size:12.4px;letter-spacing:0.073px;">6 Technical data</div>
<div class="bm" style="left:80.5px;top:614px;font-size:12.4px;letter-spacing:0.010px;">7 Ordering information</div>
<div class="bm" style="left:80.5px;top:632px;font-size:12.4px;letter-spacing:-0.207px;">EC Conformity Declaration</div>
<div class="bm" style="left:80.5px;top:650px;font-size:12.4px;letter-spacing:0.090px;">EDP-no. 5452 900.019-10/1008</div>
<div class="a" style="left:390px;top:172.4px;width:45.5px;height:89px;border-radius:0 45px 45px 0;background:#c8c9cb"></div>
<div class="hl" style="top:169px"></div>
<div class="hl" style="top:258px"></div>
<div class="hl" style="top:362px"></div>
<div class="hl" style="top:414px"></div>
<div class="hl" style="top:503px"></div>
<div class="hl" style="top:573px"></div>
<div class="hl" style="top:625px"></div>
<div class="hl" style="top:662px"></div>
<div class="hl" style="top:714px"></div>
<div class="hl" style="top:766px"></div>
<div class="dl" style="left:470.5px;top:177px;letter-spacing:0.108px">No display.</div>
<div class="dl" style="left:638.5px;top:177px;letter-spacing:0.160px">No main power</div>
<div class="dl" style="left:844.5px;top:177px;letter-spacing:0.095px">Plug in mains cable on both sides.</div>
<div class="dl" style="left:638.5px;top:195px;letter-spacing:0.192px">connection.</div>
<div class="dl" style="left:638.5px;top:229px;letter-spacing:0.009px">Power failure.</div>
<div class="dl" style="left:844.5px;top:229px;letter-spacing:0.072px">Check the mains fuse of the lab.</div>
<div class="dl" style="left:470.5px;top:265px;letter-spacing:0.150px">Lid cannot be opened.</div>
<div class="dl" style="left:638.5px;top:265px;letter-spacing:0.009px">Power failure.</div>
<div class="dl" style="left:844.5px;top:265px;letter-spacing:-0.038px">Emergency lid release</div>
<div class="dl" style="left:844.5px;top:284px;letter-spacing:-0.169px">(see Sec. 3.8).</div>
<div class="dl" style="left:638.5px;top:317px;letter-spacing:0.099px">Rotor is still spinning.</div>
<div class="dl" style="left:844.5px;top:317px;letter-spacing:0.149px">Wait for the rotor to come to a</div>
<div class="dl" style="left:844.5px;top:336px;letter-spacing:0.128px">standstill.</div>
<div class="dl" style="left:470.5px;top:369px;letter-spacing:0.031px">Centrifuge shakes</div>
<div class="dl" style="left:638.5px;top:369px;letter-spacing:0.174px">Rotor not loaded</div>
<div class="dl" style="left:844.5px;top:369px;letter-spacing:0.131px">Stop centrifuge run and load</div>
<div class="dl" style="left:470.5px;top:388px;letter-spacing:0.083px">during acceleration.</div>
<div class="dl" style="left:638.5px;top:388px;letter-spacing:0.105px">symmetrically.</div>
<div class="dl" style="left:844.5px;top:388px;letter-spacing:0.115px">centrifuge symmetrically.</div>
<div class="dl" style="left:470.5px;top:421px;letter-spacing:0.211px">&quot;LID&quot;</div>
<div class="dl" style="left:638.5px;top:421px;letter-spacing:0.178px">Lid not closed correctly.</div>
<div class="dl" style="left:844.5px;top:421px;letter-spacing:0.039px">Press lid closed.</div>
<div class="dl" style="left:638.5px;top:458px;letter-spacing:0.104px">Error with lid closing</div>
<div class="dl" style="left:844.5px;top:458px;letter-spacing:0.077px">Contact Service.</div>
<div class="dl" style="left:638.5px;top:477px;letter-spacing:0.083px">mechanism.</div>
<div class="dl" style="left:470.5px;top:510px;letter-spacing:0.171px">&quot;INT&quot;</div>
<div class="dl" style="left:638.5px;top:510px;letter-spacing:0.051px">Power failure during run.</div>
<div class="dl" style="left:844.5px;top:510px;letter-spacing:0.095px">Check the mains plug.</div>
<div class="dl" style="left:844.5px;top:529px;letter-spacing:0.125px">Restart the centrifuge using Start/</div>
<div class="dl" style="left:844.5px;top:547px;letter-spacing:0.337px">Stop</div>
<div class="dl" style="left:470.5px;top:581px;letter-spacing:0.103px">&quot;Err 5&quot;</div>
<div class="dl" style="left:638.5px;top:581px;letter-spacing:0.106px">Defective lid latch.</div>
<div class="dl" style="left:844.5px;top:581px;letter-spacing:0.058px">Allow device to stand switched on for</div>
<div class="dl" style="left:844.5px;top:599px;letter-spacing:0.045px">at least 8 min.</div>
<div class="dl" style="left:470.5px;top:633px;letter-spacing:0.103px">&quot;Err 8&quot;</div>
<div class="dl" style="left:638.5px;top:633px;letter-spacing:0.108px">Rotor not properly secured.</div>
<div class="dl" style="left:844.5px;top:633px;letter-spacing:0.087px">Tighten rotor nut.</div>
<div class="dl" style="left:470.5px;top:670px;letter-spacing:0.182px">&quot;Err 9&quot; to &quot;Err 14&quot;</div>
<div class="dl" style="left:638.5px;top:670px;letter-spacing:-0.012px">Electronics error.</div>
<div class="dl" style="left:844.5px;top:670px;letter-spacing:0.119px">Switch off centrifuge and then switch</div>
<div class="dl" style="left:844.5px;top:688px;letter-spacing:-0.010px">on again.</div>
<div class="dl" style="left:470.5px;top:722px;letter-spacing:0.151px">&quot;Err 60&quot; to &quot;Err 68&quot;</div>
<div class="dl" style="left:638.5px;top:722px;letter-spacing:-0.116px">Drive error.</div>
<div class="dl" style="left:844.5px;top:722px;letter-spacing:0.161px">Allow centrifuge to cool down, then</div>
<div class="dl" style="left:844.5px;top:740px;letter-spacing:-0.031px">restart.</div>
<div class="dl" style="left:464.5px;top:801.5px;letter-spacing:0.090px">If the solutions suggested here prove to be unsuccessful, please contact Service.</div>
<div class="t" style="left:402.500px;top:204.200px;font-family:'Liberation Serif',serif;font-weight:700;font-size:21px;line-height:24px;height:24px;color:#222">5</div>
<div class="a" style="left:345px;top:331px;width:128px;height:20px;transform:rotate(-90deg);transform-origin:center center;"><div class="t" style="left:0;top:0;font-size:17px;font-weight:400;color:#222;letter-spacing:.36px;-webkit-text-stroke:.4px #222;line-height:20px">Troubleshooting</div></div>
<svg style="left:420px;top:405px" width="90" height="90" viewBox="420 405 90 90"><path d="M433 417.300L484 467" stroke="#e53a30" stroke-width="3.600" stroke-linecap="round" fill="none"/><path d="M496.900 481L487.500 452.300 482.300 465.400 467.900 471.400z" fill="#e53a30"/></svg>

<!-- vertical scrollbar -->
<div class="a" style="left:1263px;top:165px;width:17px;height:9px;background:#dcdcdc;border:1px solid #666"></div>
<div class="a" style="left:1268px;top:180px;width:0;height:0;border-left:4px solid transparent;border-right:4px solid transparent;border-bottom:4.500px solid #444"></div>
<div class="a" style="left:1268px;top:985px;width:0;height:0;border-left:4px solid transparent;border-right:4px solid transparent;border-top:4.500px solid #444"></div>
<div class="a" style="left:1264px;top:737px;width:15px;height:28.500px;border:1px solid #a0a0a0;border-radius:2px;background:linear-gradient(90deg,#fafafa 0%,#ececec 45%,#d2d2d2 100%)"></div>
<div class="a" style="left:1268px;top:747px;width:7px;height:1px;background:#444;box-shadow:0 3px 0 #444,0 6px 0 #444"></div>
<!-- status bar -->
<svg style="left:16px;top:1000px" width="16" height="14" viewBox="0 0 16 14" fill="none" stroke="#333" stroke-width="1.400"><path d="M7.500 1L1.500 7l6 6M14 1L8 7l6 6"/></svg>
<svg style="left:47px;top:1000px" width="10" height="14" viewBox="0 0 10 14" fill="none" stroke="#333" stroke-width="1.400"><path d="M8 1L2 7l6 6"/></svg>
<div class="a" style="left:68.500px;top:997.500px;width:113.500px;height:19.500px;background:#fff;border:1px solid #e4e4e4"></div>
<div class="ar" style="left:172.500px;top:1006.500px;border-left-width:3px;border-right-width:3px;border-top-width:3.500px;border-top-color:#111"></div>
<svg style="left:193px;top:1000px" width="10" height="14" viewBox="0 0 10 14" fill="none" stroke="#333" stroke-width="1.400"><path d="M2 1l6 6-6 6"/></svg>
<svg style="left:219px;top:1000px" width="16" height="14" viewBox="0 0 16 14" fill="none" stroke="#333" stroke-width="1.400"><path d="M2 1l6 6-6 6M8.500 1l6 6-6 6"/></svg>
<svg style="left:245px;top:998px" width="18" height="17" viewBox="0 0 18 17" fill="none" stroke="#333" stroke-width="1.300"><path d="M4.500 11.500H1V1.500h7"/><rect x="5" y="6" width="11.500" height="10" /><path d="M16 2.500h-5.500M12.500.5l-2 2 2 2" stroke-width="1.100"/></svg>
<svg style="left:273px;top:998px" width="18" height="17" viewBox="0 0 18 17" fill="none" stroke="#bdbdbd" stroke-width="1.300"><path d="M6 12H1.500V1.500h10V5"/><rect x="6" y="5.500" width="11" height="10.500" rx="1"/><path d="M2 13.500h5M5.500 11.500l2 2-2 2" stroke-width="1.100"/></svg>
<!-- right status -->
<div class="a" style="left:906px;top:996px;width:24px;height:22px;background:#e2e2e2"></div>
<svg style="left:910px;top:999px" width="16" height="16" viewBox="0 0 16 16" fill="none" stroke="#333" stroke-width="1.200"><rect x="1" y="1" width="13.500" height="14"/><path d="M4 5h7.500M4 8h7.500M4 11h7.500"/></svg>
<svg style="left:937px;top:999px" width="17" height="17" viewBox="0 0 17 17" fill="none" stroke="#333" stroke-width="1.200"><path d="M2.500 1h12v9.500h-12zM4.500 4h8M4.500 7h8M1 13h15v3.500M1 16.500V13M4.500 15.500h8"/></svg>
<svg style="left:965px;top:999px" width="17" height="16" viewBox="0 0 17 16" fill="none" stroke="#333" stroke-width="1.200"><rect x="1" y="1" width="6.500" height="14"/><rect x="9.500" y="1" width="6.500" height="14"/><path d="M2.800 5h3M2.800 8h3M2.800 11h3M11.300 5h3M11.300 8h3M11.300 11h3" stroke-width="1"/></svg>
<svg style="left:993px;top:999px" width="17" height="17" viewBox="0 0 17 17" fill="none" stroke="#333" stroke-width="1.200"><rect x="1" y="1" width="6.500" height="9"/><rect x="9.500" y="1" width="6.500" height="9"/><path d="M2.800 4h3M2.800 7h3M11.300 4h3M11.300 7h3" stroke-width="1"/><path d="M1 16.500V12.500h6.500v4M9.500 16.500V12.500H16v4"/></svg>
<div class="a" style="left:1018px;top:1006px;width:8px;height:2px;background:#444"></div>
<div class="a" style="left:1029px;top:1006px;width:111px;height:2px;background:#adadad"></div>
<div class="a" style="left:1085.500px;top:1001.500px;width:11px;height:11px;border-radius:6px;background:#fff;border:1.200px solid #666"></div>
<div class="a" style="left:1144px;top:1006px;width:8px;height:2px;background:#444"></div><div class="a" style="left:1147px;top:1003px;width:2px;height:8px;background:#444"></div>
<div class="a" style="left:1154px;top:997.500px;width:78.500px;height:19.500px;background:#fff;border:1px solid #e6e6e6"></div>
<div class="ar" style="left:1223.500px;top:1005.500px;border-left-width:3.500px;border-right-width:3.500px;border-top-width:4px;border-top-color:#bbb"></div>
<svg style="left:1241px;top:999px" width="15" height="15" viewBox="0 0 15 15" fill="none" stroke="#444" stroke-width="1.200"><path d="M1 5V1h4M1 1l4 4M10 1h4v4M14 1l-4 4M1 10v4h4M1 14l4-4M14 10v4h-4M14 14l-4-4"/></svg>
<!-- bottom edge -->
<div class="a" style="left:0;top:1021px;width:1280px;height:1px;background:#e4e6ea"></div>
<div class="a" style="left:0;top:1022px;width:1280px;height:1px;background:#6f7d92"></div>
<div class="a" style="left:0;top:1023px;width:1280px;height:1px;background:#dfe5ee"></div>
<div class="a" style="left:60px;top:1022px;width:182px;height:2px;background:#fff;border-top:1px solid #111;border-left:1px solid #111;border-right:1px solid #111"></div>
<div class="a" style="left:118px;top:1022px;width:5px;height:2px;background:#c8d4e4"></div><div class="a" style="left:176px;top:1022px;width:8px;height:2px;background:#c8d4e4"></div>

<div class="t" style="left:481.5px;top:4.699999999999999px;font-size:12px;font-weight:400;color:#fff;letter-spacing:-0.091px;">MiniSpin_and_MiniSpin_plus_en.pdf (ЗАЩИЩЕНО) - Foxit PDF Reader</div>
<div class="t" style="left:13.5px;top:31.799999999999997px;font-size:13px;font-weight:700;color:#4a4a52;letter-spacing:-0.195px;">Файл</div>
<div class="t" style="left:72.5px;top:31.799999999999997px;font-size:13px;font-weight:700;color:#f28021;letter-spacing:-0.225px;">Главная</div>
<div class="t" style="left:152.5px;top:31.799999999999997px;font-size:13px;font-weight:700;color:#4a4a52;letter-spacing:-0.159px;">Комментарий</div>
<div class="t" style="left:266.5px;top:31.799999999999997px;font-size:13px;font-weight:700;color:#4a4a52;letter-spacing:-0.614px;">Вид</div>
<div class="t" style="left:319.5px;top:31.799999999999997px;font-size:13px;font-weight:700;color:#4a4a52;letter-spacing:0.063px;">Форма</div>
<div class="t" style="left:390.9px;top:31.799999999999997px;font-size:13px;font-weight:700;color:#4a4a52;letter-spacing:0.042px;">Защитить</div>
<div class="t" style="left:482.3px;top:31.799999999999997px;font-size:13px;font-weight:700;color:#4a4a52;letter-spacing:-0.253px;">Поделиться</div>
<div class="t" style="left:586.3px;top:31.799999999999997px;font-size:13px;font-weight:700;color:#4a4a52;letter-spacing:-0.192px;">Справка</div>
<div class="t" style="left:1120.5px;top:30px;font-size:12px;font-weight:400;color:#aaa;letter-spacing:-0.090px;">Найти</div>
<div class="t" style="left:11.5px;top:91.5px;font-size:12px;font-weight:400;color:#50505a;letter-spacing:-0.101px;">Рука</div>
<div class="t" style="left:49.5px;top:91.5px;font-size:12px;font-weight:400;color:#50505a;letter-spacing:-0.078px;">Выбрать</div>
<div class="t" style="left:106.5px;top:91.5px;font-size:12px;font-weight:400;color:#b7b7b7;letter-spacing:0.105px;">Снимок</div>
<div class="t" style="left:164.5px;top:91.5px;font-size:12px;font-weight:400;color:#b7b7b7;letter-spacing:0.219px;">Буфер</div>
<div class="t" style="left:157.5px;top:107.5px;font-size:12px;font-weight:400;color:#b7b7b7;letter-spacing:0.214px;">обмена</div>
<div class="t" style="left:227.5px;top:91.5px;font-size:12px;font-weight:400;color:#50505a;letter-spacing:-0.435px;">Масштаб</div>
<div class="t" style="left:284.5px;top:91.5px;font-size:12px;font-weight:400;color:#50505a;letter-spacing:0.195px;">Параметр подгона</div>
<div class="t" style="left:305.5px;top:107.5px;font-size:12px;font-weight:400;color:#50505a;letter-spacing:0.141px;">страницы</div>
<div class="t" style="left:398.5px;top:91.5px;font-size:12px;font-weight:400;color:#50505a;letter-spacing:0.131px;">Обратный</div>
<div class="t" style="left:403.5px;top:107.5px;font-size:12px;font-weight:400;color:#50505a;letter-spacing:0.523px;">порядок</div>
<div class="t" style="left:465.5px;top:91.5px;font-size:12px;font-weight:400;color:#50505a;letter-spacing:0.286px;">Поворот</div>
<div class="t" style="left:531.5px;top:91.5px;font-size:12px;font-weight:400;color:#b7b7b7;letter-spacing:-0.457px;">Пишущая</div>
<div class="t" style="left:533.5px;top:107.5px;font-size:12px;font-weight:400;color:#b7b7b7;letter-spacing:-0.325px;">машинка</div>
<div class="t" style="left:592.5px;top:91.5px;font-size:12px;font-weight:400;color:#b7b7b7;letter-spacing:0.228px;">Подсвеченный</div>
<div class="t" style="left:695.5px;top:91.5px;font-size:12px;font-weight:400;color:#b7b7b7;letter-spacing:-0.447px;">Ссылка</div>
<div class="t" style="left:745.5px;top:91.5px;font-size:12px;font-weight:400;color:#b7b7b7;letter-spacing:-0.171px;">Закладка</div>
<div class="t" style="left:813.5px;top:91.5px;font-size:12px;font-weight:400;color:#b7b7b7;letter-spacing:0.315px;">Вложенный</div>
<div class="t" style="left:832.5px;top:107.5px;font-size:12px;font-weight:400;color:#b7b7b7;letter-spacing:-0.116px;">файл</div>
<div class="t" style="left:893.5px;top:91.5px;font-size:12px;font-weight:400;color:#b7b7b7;letter-spacing:0.402px;">Аннотация к</div>
<div class="t" style="left:889.5px;top:107.5px;font-size:12px;font-weight:400;color:#b7b7b7;letter-spacing:0.345px;">изображению</div>
<div class="t" style="left:982.5px;top:91.5px;font-size:12px;font-weight:400;color:#b7b7b7;letter-spacing:0.388px;">Аудио</div>
<div class="t" style="left:977.5px;top:107.5px;font-size:12px;font-weight:400;color:#b7b7b7;letter-spacing:0.190px;">и видео</div>
<div class="t" style="left:1040.5px;top:91.5px;font-size:12px;font-weight:400;color:#333;letter-spacing:0.266px;">Заполнение</div>
<div class="t" style="left:1046.5px;top:107.5px;font-size:12px;font-weight:400;color:#333;letter-spacing:0.377px;">и подпись</div>
<div class="t" style="left:47.5px;top:145px;font-size:12px;font-weight:400;color:#5c5c5c;letter-spacing:0.050px;">Начать</div>
<div class="t" style="left:198.5px;top:145px;font-size:12px;font-weight:400;color:#5c5c5c;letter-spacing:-0.076px;">MiniSpin_and_MiniSpin_p...</div>
<div class="t" style="left:46.5px;top:172px;font-size:14px;font-weight:400;color:#999;letter-spacing:-0.099px;">Закладки</div>
<div class="t" style="left:72.5px;top:997.5px;font-size:12.3px;font-weight:400;color:#111;letter-spacing:0.599px;">14 / 19</div>
<div class="t" style="left:1158.1px;top:997.5px;font-size:12.3px;font-weight:400;color:#111;letter-spacing:0.293px;">139,50%</div>
<div class="t" style="left:1124.5px;top:131.5px;font-size:13.5px;font-weight:700;color:#fff;letter-spacing:-0.459px;font-style:italic;">Convert</div>
<div class="t" style="left:1124.5px;top:144.8px;font-size:13.5px;font-weight:400;color:#fff;letter-spacing:-0.474px;font-style:italic;">Word to PDF</div>
<!-- watermark -->
<svg style="left:1185px;top:1004px" width="95" height="20" viewBox="0 0 95 20"><g transform="translate(9,14.400) scale(1.150,1)"><text x="0" y="0" font-family="Liberation Sans" font-weight="700" font-size="12.400" stroke="#fff" stroke-width="3.200" stroke-linejoin="round" fill="#fff">medteh.info</text><text x="0" y="0" font-family="Liberation Sans" font-weight="700" font-size="12.400" stroke="#000" stroke-width=".9" fill="#000">medteh.info</text></g></svg>

</body></html>
